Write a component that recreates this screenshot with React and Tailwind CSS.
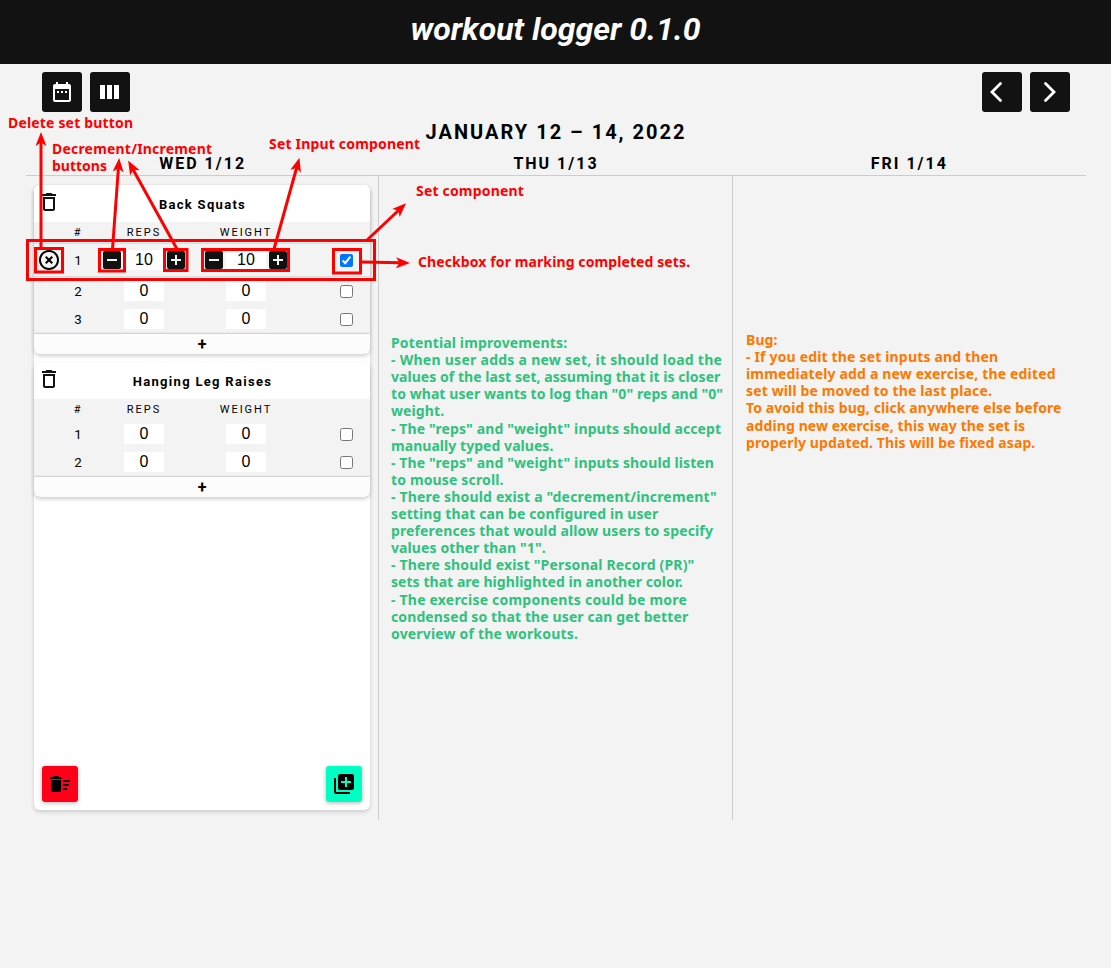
import { MdDateRange, MdDeleteOutline, MdHighlightOff, MdDeleteSweep, MdLibraryAdd, MdAddBox, MdIndeterminateCheckBox } from "react-icons/md";

const NOTE = "absolute font-['Noto_Sans',sans-serif] font-bold text-[14px] leading-[17.1px] whitespace-pre";

const IMPROVEMENTS = [
  ["Potential improvements:", "tracking-[0.14px]"],
  ["- When user adds a new set, it should load the", "tracking-[0.27px]"],
  ["values of the last set, assuming that it is closer", "tracking-[0.05px]"],
  ['to what user wants to log than "0" reps and "0"', "tracking-[0.07px]"],
  ["weight.", "tracking-[0.1px]"],
  ['- The "reps" and "weight" inputs should accept', "tracking-[0.12px]"],
  ["manually typed values.", "tracking-[0.05px]"],
  ['- The "reps" and "weight" inputs should listen', "tracking-[0.12px]"],
  ["to mouse scroll.", "tracking-[0.15px]"],
  ['- There should exist a "decrement/increment"', "tracking-[0.18px]"],
  ["setting that can be configured in user", "tracking-[0.12px]"],
  ["preferences that would allow users to specify", "tracking-[0.13px]"],
  ['values other than "1".', "tracking-[0.1px]"],
  ['- There should exist "Personal Record (PR)"', "tracking-[0.16px]"],
  ["sets that are highlighted in another color.", "tracking-[0.05px]"],
  ["- The exercise components could be more", "tracking-[0.21px]"],
  ["condensed so that the user can get better", "tracking-[0.11px]"],
  ["overview of the workouts.", "tracking-[0.18px]"],
];

const BUG = [
  ["Bug:", "tracking-[0.1px]"],
  ["- If you edit the set inputs and then", "tracking-[0.17px]"],
  ["immediately add a new exercise, the edited", "tracking-[0.17px]"],
  ["set will be moved to the last place.", "tracking-[0.14px]"],
  ["To avoid this bug, click anywhere else before", "tracking-[0.1px]"],
  ["adding new exercise, this way the set is", "tracking-[0.11px]"],
  ["properly updated. This will be fixed asap.", "tracking-[0.11px]"],
];

function Stepper({ value, active }) {
  return (
    <div className="flex w-[90px] items-center justify-center">
      {active && <MdIndeterminateCheckBox className="size-6 shrink-0 text-[#111]" />}
      <div className="flex h-5 w-10 shrink-0 justify-center bg-white font-['Liberation_Sans',sans-serif] text-[16px] leading-[19px]">{value}</div>
      {active && <MdAddBox className="size-6 shrink-0 text-[#111]" />}
    </div>
  );
}

function SetRow({ n, value, active }) {
  return (
    <div className={"flex items-center " + (active ? "h-[34px] border-y border-[#dcdcdc]" : "h-7")}>
      <div className="flex w-[30px] justify-center">{active && <MdHighlightOff className="size-6" />}</div>
      <div className="w-[29px] pt-[2px] text-center text-[13.33px] leading-5 tracking-[1px]">{n}</div>
      <div className="ml-[6px]"><Stepper value={value} active={active} /></div>
      <div className="ml-[12px]"><Stepper value={value} active={active} /></div>
      <input type="checkbox" defaultChecked={active} className="m-0 mt-[1px] ml-[49px] size-[13px]" />
    </div>
  );
}

function Exercise({ name, sets }) {
  return (
    <div className="flex flex-col overflow-hidden rounded-md bg-[#f3f3f3] shadow-[0_2px_4px_rgba(0,0,0,0.2)]">
      <div className="grid h-[37px] grid-cols-[30px_1fr_30px] items-center bg-white">
        <MdDeleteOutline className="mb-[3px] ml-[3px] size-6 text-[#111]" />
        <div className="pt-[3px] pl-px text-center text-[13px] leading-5 font-bold tracking-[1.3px]">{name}</div>
      </div>
      <div className="flex h-[21px] items-center pt-px text-[11px] tracking-[1.95px]">
        <div className="ml-[30px] w-[28px] text-center">#</div>
        <div className="ml-[7px] w-[90px] text-center">REPS</div>
        <div className="ml-[12px] w-[90px] text-center">WEIGHT</div>
      </div>
      <div className={sets[0].active ? "h-[91px]" : "h-[57px]"}>
        {sets.map((s, i) => <SetRow key={i} n={i + 1} {...s} />)}
      </div>
      <div className="flex h-5 items-center justify-center bg-[#fcfcfc] pt-px text-[16px] leading-5 font-bold shadow-[0_0_2px_rgba(0,0,0,0.4)]">+</div>
    </div>
  );
}

function NavButton({ children }) {
  return <div className="flex size-10 items-center justify-center rounded-[3px] bg-[#121212] text-white">{children}</div>;
}

function Annotations() {
  return (
    <>
      <svg className="absolute top-0 left-0" width="1111" height="968" fill="none" stroke="#f00" strokeWidth="3">
        <defs>
          <marker id="tip" viewBox="-14 -6 15 12" refX="-9" refY="0" markerWidth="15" markerHeight="12" markerUnits="userSpaceOnUse" orient="auto">
            <path d="M0 0L-14 -5.5L-10.5 0L-14 5.5Z" fill="#f00" stroke="none" />
          </marker>
        </defs>
        <rect x="27.5" y="240.5" width="347" height="39" />
        <rect x="35.5" y="248.5" width="27" height="23.5" />
        <rect x="99.5" y="249.5" width="25" height="21.5" />
        <rect x="164.5" y="249.5" width="22.5" height="21" />
        <rect x="202.5" y="249.5" width="86" height="21" />
        <rect x="333.5" y="249.5" width="27" height="23.5" />
        <path markerEnd="url(#tip)" d="M41 248V141" />
        <path markerEnd="url(#tip)" d="M112.5 249L118.5 167" />
        <path markerEnd="url(#tip)" d="M177 249L132.5 168.5" />
        <path markerEnd="url(#tip)" d="M274 249L297 166.5" />
        <path markerEnd="url(#tip)" d="M366 241L399.5 209.5" />
        <path markerEnd="url(#tip)" d="M361 262L401 262.8" />
      </svg>
      <div className={NOTE + " top-[114px] left-[8px] tracking-[0.17px] text-[#f00]"}>Delete set button</div>
      <div className={NOTE + " top-[140px] left-[52px] text-[#f00]"}>
        <div className="tracking-[0.2px]">Decrement/Increment</div>
        <div>buttons</div>
      </div>
      <div className={NOTE + " top-[135px] left-[269px] tracking-[0.18px] text-[#f00]"}>Set Input component</div>
      <div className={NOTE + " top-[182px] left-[416px] tracking-[0.18px] text-[#f00]"}>Set component</div>
      <div className={NOTE + " top-[253px] left-[418px] tracking-[0.1px] text-[#f00]"}>Checkbox for marking completed sets.</div>
      <div className={NOTE + " top-[334.1px] left-[391px] text-[#2ec27e]"}>
        {IMPROVEMENTS.map(([line, tracking]) => <div key={line} className={tracking}>{line}</div>)}
      </div>
      <div className={NOTE + " top-[331.1px] left-[746px] text-[#ff7800]"}>
        {BUG.map(([line, tracking]) => <div key={line} className={tracking}>{line}</div>)}
      </div>
    </>
  );
}

export default function App() {
  return (
    <div className="relative h-[968px] w-[1111px] overflow-hidden bg-[#f3f3f3] font-['Roboto',sans-serif] text-black">
      <header className="flex h-16 justify-center bg-[#121212] pt-[9px] text-[32px] leading-10 font-bold text-white italic">workout logger 0.1.0</header>
      <div className="flex justify-between pt-2 pr-[41px] pl-[42px]">
        <div className="flex gap-2">
          <NavButton><MdDateRange className="size-6" /></NavButton>
          <NavButton><svg width="24" height="24" fill="currentColor"><path d="M2 5h5v14h-5zM9 5h5v14h-5zM16 5h5v14h-5z" /></svg></NavButton>
        </div>
        <div className="flex gap-2">
          <NavButton><svg width="24" height="24" fill="none" stroke="currentColor" strokeWidth="2.8" strokeLinecap="round"><path d="M10.5 3.5L2 12L10.5 20.5" /></svg></NavButton>
          <NavButton><svg width="24" height="24" fill="none" stroke="currentColor" strokeWidth="2.8" strokeLinecap="round"><path d="M7.5 3.5L16 12L7.5 20.5" /></svg></NavButton>
        </div>
      </div>
      <div className="mt-2 h-6 pl-px text-center text-[20px] leading-6 font-bold tracking-[2px]">JANUARY 12 – 14, 2022</div>
      <div className="mr-[25px] ml-[26px] grid h-8 grid-cols-3 border-b border-[#ccc] pt-[10px] text-center text-[16px] leading-5 font-bold tracking-[2px]">
        <div>WED 1/12</div><div>THU 1/13</div><div>FRI 1/14</div>
      </div>
      <div className="mr-[25px] ml-[26px] grid h-[644px] grid-cols-[353px_354px_353px]">
        <div className="border-r border-[#ccc] pt-[9px] pr-2 pl-2">
          <div className="flex h-[625px] w-[336px] flex-col gap-2 rounded-md bg-white shadow-[0_2px_4px_rgba(0,0,0,0.16)]">
            <Exercise name="Back Squats" sets={[{ value: 10, active: true }, { value: 0 }, { value: 0 }]} />
            <Exercise name="Hanging Leg Raises" sets={[{ value: 0 }, { value: 0 }]} />
            <div className="mt-auto flex justify-between p-2">
              <div className="flex size-9 items-center justify-center rounded-[3px] bg-[#ff0018] shadow-[0_1px_4px_rgba(0,0,0,0.3)]"><MdDeleteSweep className="size-6" /></div>
              <div className="flex size-9 items-center justify-center rounded-[3px] bg-[#00ffc3] shadow-[0_1px_4px_rgba(0,0,0,0.3)]"><MdLibraryAdd className="size-6" /></div>
            </div>
          </div>
        </div>
        <div className="border-r border-[#ccc]" />
        <div />
      </div>
      <Annotations />
    </div>
  );
}
